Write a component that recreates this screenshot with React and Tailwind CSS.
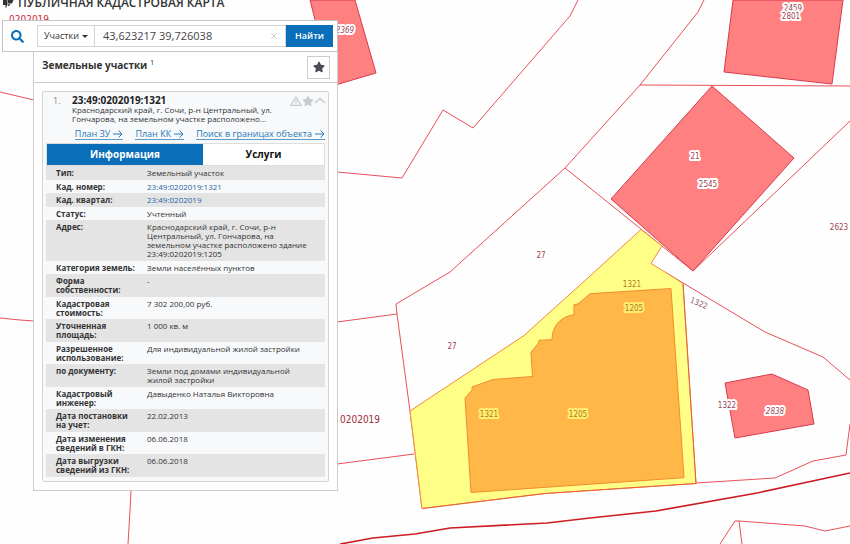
import { useState } from 'react';
import { X } from 'lucide-react';
import { FaSearch, FaStar } from 'react-icons/fa';

const rows = [
  { label: 'Тип:', value: 'Земельный участок' },
  { label: 'Кад. номер:', value: '23:49:0202019:1321', link: true },
  { label: 'Кад. квартал:', value: '23:49:0202019', link: true },
  { label: 'Статус:', value: 'Учтенный' },
  { label: 'Адрес:', value: 'Краснодарский край, г. Сочи, р-н Центральный, ул. Гончарова, на земельном участке расположено здание 23:49:0202019:1205' },
  { label: 'Категория земель:', value: 'Земли населённых пунктов' },
  { label: 'Форма собственности:', value: '-' },
  { label: 'Кадастровая стоимость:', value: '7 302 200,00 руб.' },
  { label: 'Уточненная площадь:', value: '1 000 кв. м' },
  { label: 'Разрешенное использование:', value: 'Для индивидуальной жилой застройки' },
  { label: 'по документу:', value: 'Земли под домами индивидуальной жилой застройки' },
  { label: 'Кадастровый инженер:', value: 'Давыденко Наталья Викторовна' },
  { label: 'Дата постановки на\u00a0учет:', value: '22.02.2013' },
  { label: 'Дата изменения сведений в ГКН:', value: '06.06.2018' },
  { label: 'Дата выгрузки сведений из ГКН:', value: '06.06.2018' },
];

const planLinks = ['План ЗУ', 'План КК', 'Поиск в границах объекта'];

const parcelLines = [
  '337,172 402,178 443,110 473,128 570,16 578,0',
  '704,0 698,12 640,85 565,168 450,272 396,304 397,314 410,411 422,508',
  '565,168 590,188 641,229 693,271 850,121',
  '640,85 850,86',
  '337,322 397,314',
  '337,464 414,454',
  '0,92 34,100',
  '0,318 20,320 34,321',
  '131,490 130,510 128,544',
  '665,272 683,283 765,332 823,357 850,380',
  '850,424 846,455 813,461 775,478 696,483',
  '720,544 735,521 739,521 742,544',
  '739,521 805,526 825,531 850,526',
];

const buildings = [
  '310,0 355,0 376,73 332,86',
  '733,0 724,72 832,84 843,0',
  '712,86 794,158 693,271 611,199',
  '725,383 772,374 808,390 814,424 735,438',
];

const labels = [
  { text: '27', x: 541, y: 258 },
  { text: '27', x: 452, y: 349 },
  { text: '2623', x: 839, y: 230 },
  { text: '21', x: 695, y: 159, halo: true },
  { text: '2545', x: 708, y: 187, halo: true },
  { text: '2369', x: 345, y: 33, halo: true, italic: true },
  { text: '2459', x: 793, y: 11, halo: true },
  { text: '2801', x: 791, y: 19, halo: true },
  { text: '1322', x: 727, y: 408, halo: true },
  { text: '2838', x: 775, y: 414, halo: true, italic: true },
];

const selectedLabels = [
  { text: '1321', x: 632, y: 287 },
  { text: '1205', x: 634, y: 311, halo: true },
  { text: '1321', x: 489, y: 417, halo: true },
  { text: '1205', x: 578, y: 417, halo: true },
];

function MapLabel({ text, x, y, halo, italic, fill, haloColor }) {
  return (
    <text
      x={x}
      y={y}
      textAnchor="middle"
      fill={fill}
      stroke={halo ? haloColor : 'none'}
      strokeWidth="4"
      strokeLinejoin="round"
      paintOrder="stroke"
      fontStyle={italic ? 'italic' : 'normal'}
    >
      {text}
    </text>
  );
}

function CadastralMap() {
  return (
    <svg
      className="absolute inset-0 h-full w-full font-['DejaVu_Sans_Condensed','DejaVu_Sans',sans-serif] text-[8px]"
      viewBox="0 0 850 544"
      preserveAspectRatio="xMinYMin slice"
      role="img"
      aria-label="Кадастровая карта"
    >
      <g fill="none" stroke="#e85058" strokeWidth="1">
        {parcelLines.map((points) => <polyline key={points} points={points} />)}
      </g>
      <g fill="#ff8080" stroke="#d83a4c" strokeWidth="1">
        {buildings.map((points) => <polygon key={points} points={points} />)}
      </g>
      <path
        d="M641 229.500L662 246L651 263.500L665 272L683 283.500L696 483.500L590 490.500L545 493.500L422 508.500L410 411L524 335.500L590 276Z"
        fill="#ffff88"
        stroke="#f08a3c"
      />
      <path d="M683 283.500L696 483.500L590 490.500L545 493.500L422 508.500" fill="none" stroke="#e8603c" />
      <path
        d="M671 288.500L590 293.700L578 304L574 304.500V314.700C563 316 552 324 552 339.700L539 340.300L538 344L531 352L532.500 376.500L493 379.500L472 387V390L465 398L471 492.500L684 477.700Z"
        fill="#ffb847"
        stroke="#f08c30"
      />
      <polyline
        points="340,544 373,538 415,534 450,528 547,523 590,518 656,511 757,493 850,473"
        fill="none"
        stroke="#cc1c24"
        strokeWidth="1.7"
      />
      {labels.map((label) => (
        <MapLabel key={`${label.x}-${label.y}`} {...label} fill="#9c4454" haloColor="#fff" />
      ))}
      {selectedLabels.map((label) => (
        <MapLabel key={`${label.x}-${label.y}`} {...label} fill="#b07a20" haloColor="#ffee70" />
      ))}
      <text x="699" y="306" textAnchor="middle" fill="#94606a" transform="rotate(22 699 303)">1322</text>
      <g fill="#a02c3c" className="text-[10px]">
        <text x="340" y="423">0202019</text>
        <text x="9" y="23" fill="#d02c3c">0202019</text>
      </g>
    </svg>
  );
}

function SearchBar() {
  const [query, setQuery] = useState('43,623217 39,726038');

  return (
    <form
      className="flex h-8 items-center border border-[#c4c4c4] bg-white pr-1"
      onSubmit={(event) => event.preventDefault()}
    >
      <FaSearch className="ml-2 size-[13px] text-[#0a6fb8]" />
      <div className="ml-[13px] flex h-[22px] min-w-0 flex-1 border border-[#d4d4d4]">
        <div className="relative flex w-[57px] items-center border-r border-[#d4d4d4]">
          <select aria-label="Тип объекта" className="h-full w-full appearance-none bg-transparent pl-1.5 text-[9px] text-[#333] outline-none">
            <option>Участки</option>
            <option>ОКС</option>
          </select>
          <svg className="pointer-events-none absolute right-1.5 h-[3px] w-[6px]" viewBox="0 0 6 3">
            <path d="M0 0H6L3 3Z" fill="#333" />
          </svg>
        </div>
        <input
          aria-label="Поиск"
          className="min-w-0 flex-1 pl-2 text-[11px] text-[#444] outline-none"
          value={query}
          onChange={(event) => setQuery(event.target.value)}
        />
        <button type="button" aria-label="Очистить" className="px-1.5" onClick={() => setQuery('')}>
          <X className="size-2.5 text-[#c4c4c4]" />
        </button>
      </div>
      <button type="submit" className="h-[22px] w-[47px] bg-[#0a6fb8] text-[9px] font-semibold text-white">
        Найти
      </button>
    </form>
  );
}

function ParcelCard() {
  return (
    <article className="rounded-xs border border-[#d4d4d6] bg-[#f7f9fb] px-[3px] pt-1 pb-1">
      <div className="flex px-[7px] text-[8px] leading-[9px] text-[#333]">
        <span className="w-[19px] text-[9px] text-[#888]">1.</span>
        <div className="min-w-0 flex-1">
          <h3 className="text-[10px] leading-[9px] font-bold text-[#222]">23:49:0202019:1321</h3>
          <p className="w-[210px]">Краснодарский край, г. Сочи, р-н Центральный, ул. Гончарова, на земельном участке расположено...</p>
        </div>
        <div className="-mr-2 flex text-[#c8cacc]">
          <svg className="h-2.5 w-3" viewBox="0 0 12 10" fill="none" stroke="currentColor">
            <path d="M6 1L11 9.300H1Z M6 3.800V6.500 M6 7.300V8.300" strokeWidth="1.200" />
          </svg>
          <FaStar className="h-2.5 w-3" />
          <svg className="h-2.5 w-3" viewBox="0 0 12 10" fill="none" stroke="currentColor">
            <path d="M1 7L6 2.500L11 7" strokeWidth="1.500" />
          </svg>
        </div>
      </div>
      <nav className="mt-1.5 flex justify-end gap-3 text-[9px] leading-[10px] text-[#2a78b8]">
        {planLinks.map((link) => (
          <a key={link} href="#" className="flex items-center gap-[3px] border-b border-[#5a9acb] whitespace-nowrap">
            {link}
            <svg className="h-2 w-2.5" viewBox="0 0 10 8" fill="none" stroke="currentColor">
              <path d="M0 4H9 M5.500 0.500L9 4L5.500 7.500" />
            </svg>
          </a>
        ))}
      </nav>
      <div className="mt-[3px] flex h-[23px] border border-[#ddd] text-[10px] font-bold">
        <button type="button" className="w-[156px] bg-[#0a6fb8] text-white">Информация</button>
        <button type="button" className="flex-1 bg-white text-[#111]">Услуги</button>
      </div>
      <table className="w-full text-left text-[8px] leading-[9px] text-[#333]">
        <tbody>
          {rows.map((row) => (
            <tr key={row.label} className="group align-top odd:bg-[#e4e4e4]">
              <th scope="row" className="w-[101px] py-[2px] pr-2 pl-2.5 font-bold text-[#333] group-odd:pb-[3px]">{row.label}</th>
              <td className="py-[2px] pr-3 group-odd:pb-[3px]">
                {row.link ? <a href="#" className="text-[#1f66a4]">{row.value}</a> : row.value}
              </td>
            </tr>
          ))}
        </tbody>
      </table>
    </article>
  );
}

export default function App() {
  return (
    <main className="relative min-h-screen overflow-hidden bg-[#fefefe] font-['Open_Sans','Noto_Sans',sans-serif]">
      <CadastralMap />
      <div className="relative ml-[2px] w-[336px]">
        <header className="flex h-5 items-start gap-1">
          <svg className="h-2 w-3" viewBox="0 0 12 8">
            <path d="M1 0H5.500V4.500L4 8H3.500V5H1Z M6 0H11.500L10 3.500H6Z M6 4.200H8.500L7 6H6Z" fill="#333" />
          </svg>
          <h1 className="-mt-[3px] text-[12px] leading-3 font-semibold whitespace-nowrap text-[#333]">ПУБЛИЧНАЯ КАДАСТРОВАЯ КАРТА</h1>
        </header>
        <SearchBar />
        <section className="ml-[31px] border border-t-0 border-[#ccc] bg-white">
          <div className="flex h-[31px] items-center justify-between border-b border-[#ccc] pr-[7px] pl-2">
            <h2 className="mb-1 text-[10px] leading-3 font-bold text-[#333]">
              Земельные участки <sup className="font-normal">1</sup>
            </h2>
            <button type="button" aria-label="В избранное" className="flex h-[23px] w-[23px] items-center justify-center border border-[#ccc]">
              <FaStar className="size-3 text-[#484c54]" />
            </button>
          </div>
          <div className="p-2">
            <ParcelCard />
          </div>
        </section>
      </div>
    </main>
  );
}
